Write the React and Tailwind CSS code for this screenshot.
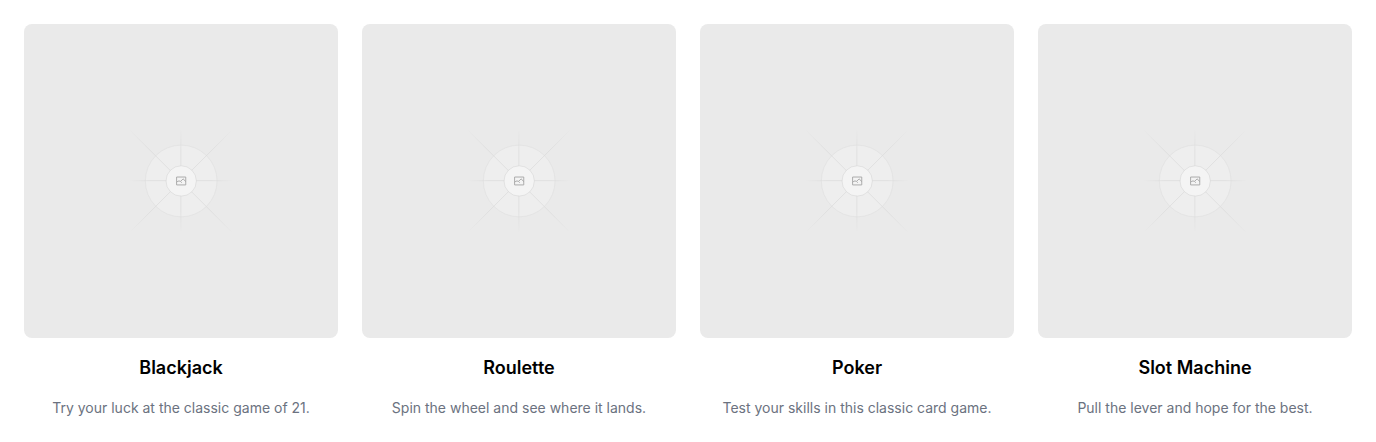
const games = [
  { title: "Blackjack", description: "Try your luck at the classic game of 21." },
  { title: "Roulette", description: "Spin the wheel and see where it lands." },
  { title: "Poker", description: "Test your skills in this classic card game." },
  { title: "Slot Machine", description: "Pull the lever and hope for the best." },
];

function Placeholder({ id }) {
  const rays = [
    [404, 598.671, 796.572, 598.671],
    [599.5, 795.742, 599.5, 404.017],
    [795.717, 796.597, 404.276, 405.157],
    [404.276, 796.036, 795.717, 404.596],
  ];
  return (
    <svg viewBox="0 0 1200 1200" fill="none" className="block aspect-square w-full rounded-lg" aria-hidden="true">
      <defs>
        {rays.map(([x1, y1, x2, y2], i) => (
          <linearGradient key={i} id={`${id}-${i}`} x1={x1} y1={y1} x2={x2} y2={y2} gradientUnits="userSpaceOnUse">
            <stop stopColor="#C9C9C9" stopOpacity="0" />
            <stop offset=".208" stopColor="#C9C9C9" />
            <stop offset=".792" stopColor="#C9C9C9" />
            <stop offset="1" stopColor="#C9C9C9" stopOpacity="0" />
          </linearGradient>
        ))}
      </defs>
      <rect width="1200" height="1200" fill="#EAEAEA" rx="3" />
      <g opacity=".5" strokeWidth="2.418">
        <g opacity=".5">
          <circle cx="600.709" cy="599.88" r="136.62" fill="#FAFAFA" />
          <circle cx="600.709" cy="599.88" r="137" stroke="#C9C9C9" />
        </g>
        {rays.map(([x1, y1, x2, y2], i) => (
          <path key={i} d={`M${x1} ${y1}L${x2} ${y2}`} stroke={`url(#${id}-${i})`} />
        ))}
        <circle cx="600.709" cy="599.88" r="56.825" fill="#fff" />
        <g stroke="#666" strokeWidth="3.6">
          <path d="M583.2 584.8h35v30.2h-35Z" />
          <path d="M583.2 605.5l5.2-5.2h8.4l6.2 6.2M599.5 600.5l8.5-8.7 11 11" />
        </g>
        <circle cx="600.709" cy="599.88" r="58.034" stroke="#C9C9C9" />
      </g>
    </svg>
  );
}

export default function App() {
  return (
    <main className="grid grid-cols-4 gap-6 bg-white p-6 font-['Inter',sans-serif]">
      {games.map(({ title, description }, i) => (
        <article key={title} className="flex flex-col text-center">
          <Placeholder id={`ray-${i}`} />
          <h2 className="mt-4 text-lg font-semibold text-black">{title}</h2>
          <p className="mt-4 text-sm text-[#6b7280]">{description}</p>
        </article>
      ))}
    </main>
  );
}
